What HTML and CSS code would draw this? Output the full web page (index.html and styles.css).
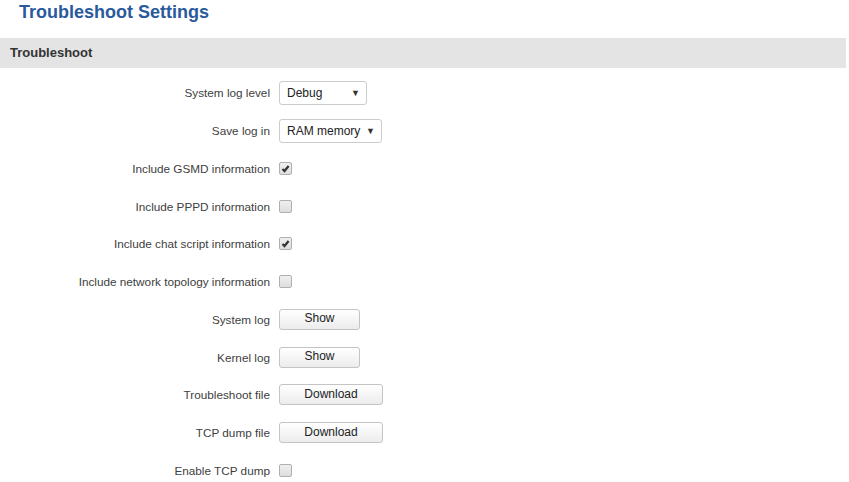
FILE: index.html
```html
<!DOCTYPE html>
<html lang="en">
<head>
  <meta charset="UTF-8">
  <meta name="viewport" content="width=device-width, initial-scale=1.0">
  <title>Troubleshoot Settings</title>
  <link rel="stylesheet" href="styles.css">
</head>
<body>
  <h2 class="pageTitle">Troubleshoot Settings</h2>
  <div class="section">
    <div class="sectionHead">Troubleshoot</div>
    <div class="rows">
      <div class="row">
        <label>System log level</label>
        <div class="select sel1"><span>Debug</span><span class="arrow">&#9660;</span></div>
      </div>
      <div class="row">
        <label>Save log in</label>
        <div class="select sel2"><span>RAM memory</span><span class="arrow">&#9660;</span></div>
      </div>
      <div class="row">
        <label>Include GSMD information</label>
        <span class="check checked"><svg viewBox="0 0 13 13" width="13" height="13"><path d="M3.5 7 L5.5 9 L9.6 4" fill="none" stroke="#333" stroke-width="2.2"/></svg></span>
      </div>
      <div class="row">
        <label>Include PPPD information</label>
        <span class="check"></span>
      </div>
      <div class="row">
        <label>Include chat script information</label>
        <span class="check checked"><svg viewBox="0 0 13 13" width="13" height="13"><path d="M3.5 7 L5.5 9 L9.6 4" fill="none" stroke="#333" stroke-width="2.2"/></svg></span>
      </div>
      <div class="row">
        <label>Include network topology information</label>
        <span class="check"></span>
      </div>
      <div class="row">
        <label>System log</label>
        <button class="btn">Show</button>
      </div>
      <div class="row">
        <label>Kernel log</label>
        <button class="btn">Show</button>
      </div>
      <div class="row">
        <label>Troubleshoot file</label>
        <button class="btn wide">Download</button>
      </div>
      <div class="row">
        <label>TCP dump file</label>
        <button class="btn wide">Download</button>
      </div>
      <div class="row">
        <label>Enable TCP dump</label>
        <span class="check"></span>
      </div>
    </div>
  </div>
</body>
</html>
```
FILE: styles.css
```css
body{
  margin: 0;
  font-family: "Liberation Sans", Arial, sans-serif;
  color: #404040;
  background-color: white;
}
.pageTitle{
  margin: 0;
  padding: 1px 19px 0 19px;
  height: 37px;
  line-height: 22px;
  font-size: 18px;
  font-weight: bold;
  color: #2a5a9c;
}
.section{
  margin-right: 3px;
}
.sectionHead{
  background-color: #e4e4e4;
  height: 30px;
  line-height: 30px;
  padding-left: 10px;
  font-size: 13px;
  font-weight: bold;
  color: #333;
}
.rows{
  padding-top: 6px;
}
.row{
  display: grid;
  grid-template-columns: 270px auto;
  column-gap: 9px;
  align-items: center;
  height: 37.75px;
  font-size: 11.75px;
}
.row label{
  text-align: right;
}
.select{
  display: flex;
  justify-content: space-between;
  align-items: center;
  box-sizing: border-box;
  height: 24px;
  padding: 0 6px 0 7px;
  border: 1px solid #ccc;
  border-radius: 3px;
  color: #222;
  font-size: 12px;
}
.sel1{
  width: 88px;
}
.sel2{
  width: 103px;
}
.arrow{
  font-size: 9px;
  color: #333;
}
.check{
  display: block;
  box-sizing: border-box;
  width: 13px;
  height: 13px;
  border: 1px solid #b0b0b0;
  border-radius: 2px;
  background: linear-gradient(#efefef, #dedede);
}
.check svg{
  display: block;
  margin: -1px;
}
.btn{
  box-sizing: border-box;
  width: 81px;
  height: 21px;
  padding: 0 0 2px 0;
  border: 1px solid #c4c4c4;
  border-radius: 3px;
  background: linear-gradient(#ffffff, #ececec);
  font-family: "Liberation Sans", Arial, sans-serif;
  font-size: 12px;
  color: #222;
}
.btn.wide{
  width: 104px;
}
```
